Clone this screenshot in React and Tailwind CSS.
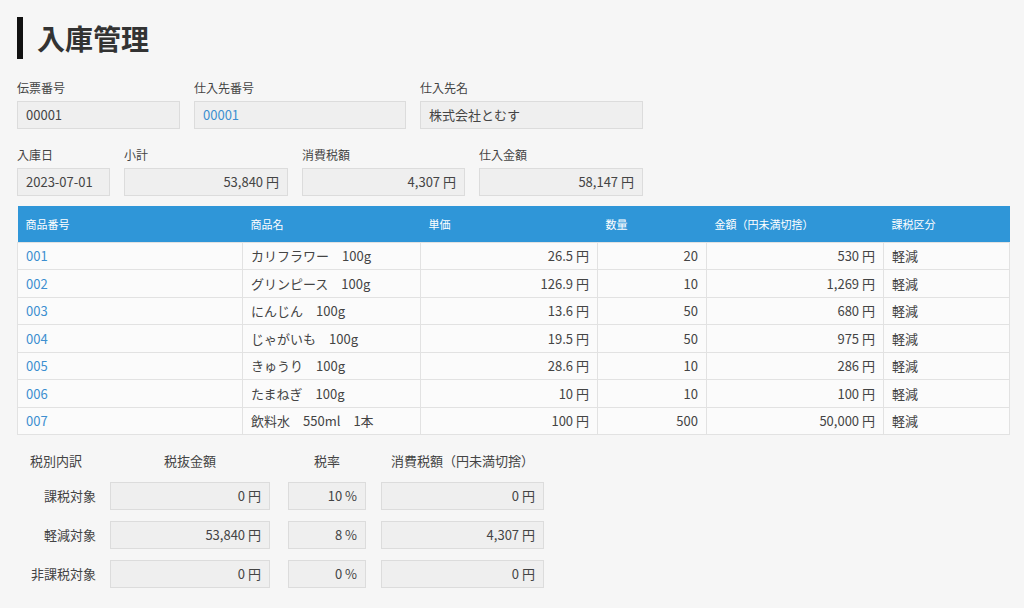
import React from 'react';

const rows = [
  ['001', 'カリフラワー　100g', '26.5 円', '20', '530 円', '軽減'],
  ['002', 'グリンピース　100g', '126.9 円', '10', '1,269 円', '軽減'],
  ['003', 'にんじん　100g', '13.6 円', '50', '680 円', '軽減'],
  ['004', 'じゃがいも　100g', '19.5 円', '50', '975 円', '軽減'],
  ['005', 'きゅうり　100g', '28.6 円', '10', '286 円', '軽減'],
  ['006', 'たまねぎ　100g', '10 円', '10', '100 円', '軽減'],
  ['007', '飲料水　550ml　1本', '100 円', '500', '50,000 円', '軽減'],
];

const taxRows = [
  ['課税対象', '0 円', '10 %', '0 円'],
  ['軽減対象', '53,840 円', '8 %', '4,307 円'],
  ['非課税対象', '0 円', '0 %', '0 円'],
];

const box = 'h-[28px] bg-[#efefef] border border-[#dcdcdc] flex items-center px-2 text-[13px]';

const Field = ({ label, value, width, right, link }) => (
  <div style={{ width }} className="flex flex-col">
    <div className="text-[12px] text-[#444] h-[15px] mb-[6px] leading-[15px]">{label}</div>
    <div className={`${box} ${right ? 'justify-end' : ''} ${link ? 'text-[#3d8fd0]' : 'text-[#444]'}`}>{value}</div>
  </div>
);

export default function App() {
  return (
    <div className="w-[1024px] h-[608px] bg-[#f6f6f6] overflow-hidden pl-[17px] pt-[17px]" style={{ fontFamily: '"Noto Sans CJK JP", "Noto Sans", sans-serif' }}>
      <div className="flex items-center h-[42px]">
        <div className="w-[6px] h-[42px] bg-[#111]" />
        <h1 className="ml-[14px] text-[28px] font-bold text-[#333] leading-none">入庫管理</h1>
      </div>

      <div className="flex mt-[21px]">
        <Field label="伝票番号" value="00001" width={163} />
        <div className="w-[14px]" />
        <Field label="仕入先番号" value="00001" width={212} link />
        <div className="w-[14px]" />
        <Field label="仕入先名" value="株式会社とむす" width={223} />
      </div>

      <div className="flex mt-[18px]">
        <Field label="入庫日" value="2023-07-01" width={93} />
        <div className="w-[14px]" />
        <Field label="小計" value="53,840 円" width={164} right />
        <div className="w-[14px]" />
        <Field label="消費税額" value="4,307 円" width={163} right />
        <div className="w-[14px]" />
        <Field label="仕入金額" value="58,147 円" width={164} right />
      </div>

      <table className="mt-[10px] w-[993px] border-collapse text-[13px] text-[#444]">
        <thead>
          <tr className="bg-[#2f96d8] text-white text-[11px] h-[36px] text-left">
            <th className="font-normal px-2 w-[225px]">商品番号</th>
            <th className="font-normal px-2 w-[178px]">商品名</th>
            <th className="font-normal px-2 w-[177px]">単価</th>
            <th className="font-normal px-2 w-[109px]">数量</th>
            <th className="font-normal px-2 w-[177px]">金額（円未満切捨）</th>
            <th className="font-normal px-2">課税区分</th>
          </tr>
        </thead>
        <tbody>
          {rows.map((r) => (
            <tr key={r[0]} className="h-[27.5px] bg-[#fbfbfb]">
              <td className="px-2 border border-[#e2e2e2] text-[#3d8fd0]">{r[0]}</td>
              <td className="px-2 border border-[#e2e2e2]">{r[1]}</td>
              <td className="px-2 border border-[#e2e2e2] text-right">{r[2]}</td>
              <td className="px-2 border border-[#e2e2e2] text-right">{r[3]}</td>
              <td className="px-2 border border-[#e2e2e2] text-right">{r[4]}</td>
              <td className="px-2 border border-[#e2e2e2]">{r[5]}</td>
            </tr>
          ))}
        </tbody>
      </table>

      <div className="mt-[16px] text-[13px] text-[#444]">
        <div className="flex h-[20px] items-center">
          <div className="w-[93px] pl-[13px]">税別内訳</div>
          <div className="w-[160px] text-center">税抜金額</div>
          <div className="w-[18px]" />
          <div className="w-[78px] text-center">税率</div>
          <div className="w-[15px]" />
          <div className="w-[163px] text-center">消費税額（円未満切捨）</div>
        </div>
        {taxRows.map((r) => (
          <div key={r[0]} className="flex items-center mt-[11px]">
            <div className="w-[79px] text-right">{r[0]}</div>
            <div className="w-[14px]" />
            <div className={`${box} text-[#444] w-[160px] justify-end`}>{r[1]}</div>
            <div className="w-[18px]" />
            <div className={`${box} text-[#444] w-[78px] justify-end`}>{r[2]}</div>
            <div className="w-[15px]" />
            <div className={`${box} text-[#444] w-[163px] justify-end`}>{r[3]}</div>
          </div>
        ))}
      </div>
    </div>
  );
}
